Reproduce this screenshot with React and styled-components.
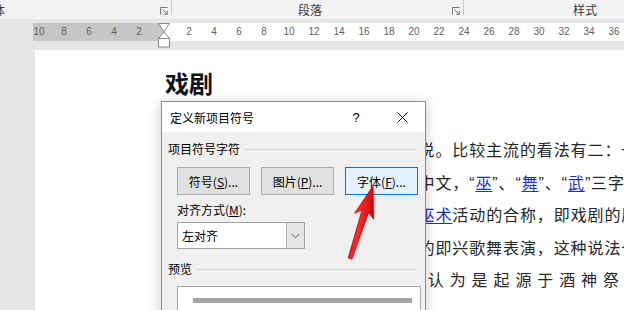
import React from "react";
import styled, { createGlobalStyle } from "styled-components";

const GlobalStyle = createGlobalStyle`
  html, body {
    margin: 0;
    padding: 0;
    background: #e6e6e6;
  }
  body {
    font-family: "Noto Sans CJK SC", "Noto Sans", sans-serif;
  }
`;

const Screen = styled.div`
  position: relative;
  width: 624px;
  height: 310px;
  overflow: hidden;
  background: #e6e6e6;
  display: flex;
  flex-direction: column;
`;

/* ---------- ribbon ---------- */

const Ribbon = styled.div`
  display: flex;
  flex-shrink: 0;
  height: 19px;
  background: #f3f3f3;
`;

const Group = styled.div`
  display: flex;
  align-items: center;
  flex-shrink: 0;
  width: ${({ $width }) => $width}px;
  margin-left: ${({ $offset = 0 }) => $offset}px;
`;

const GroupLabel = styled.div`
  flex: 1;
  text-align: center;
  font-size: 12px;
  line-height: 19px;
  color: #3b3b3b;
  white-space: nowrap;
`;

const Launcher = styled.svg`
  width: 8px;
  height: 8px;
  margin: 2px 3px 0 4px;
  flex-shrink: 0;
`;

const Separator = styled.div`
  width: 1px;
  height: 15px;
  flex-shrink: 0;
  background: #c8c8c8;
  align-self: flex-start;
`;

const LauncherIcon = () => (
  <Launcher viewBox="0 0 8 8">
    <path d="M0.5 7.5V0.5H7.5" fill="none" stroke="#777" strokeWidth="1" />
    <path d="M2.5 2.5L7 7M3.8 7.3H7.3V3.8" fill="none" stroke="#777" strokeWidth="1" />
  </Launcher>
);

/* ---------- ruler ---------- */

const RulerRow = styled.div`
  position: relative;
  display: flex;
  flex-shrink: 0;
  height: 18px;
  margin-top: 4px;
  padding-left: 33px;
`;

const RulerMargin = styled.div`
  display: flex;
  justify-content: flex-end;
  width: 131px;
  padding-right: 12.5px;
  box-sizing: border-box;
  background: #c6c6c6;
`;

const RulerBody = styled.div`
  display: flex;
  flex: 1;
  padding-left: 12.5px;
  background: #ffffff;
`;

const Tick = styled.span`
  width: 25px;
  flex-shrink: 0;
  text-align: center;
  font-family: "Liberation Sans", Arial, sans-serif;
  font-size: 10px;
  line-height: 18px;
  color: #5f5f5f;
`;

const IndentMarker = styled.svg`
  position: absolute;
  left: 157px;
  top: 0;
  width: 14px;
  height: 26px;
`;

/* ---------- document ---------- */

const Workspace = styled.div`
  flex: 1;
  display: flex;
  padding: 9px 0 0 35px;
`;

const Page = styled.div`
  flex: 1;
  background: #ffffff;
  padding: 18px 0 0 130px;
  color: #262626;
`;

const Heading = styled.h1`
  margin: 0;
  font-size: 24px;
  line-height: 30px;
  font-weight: 700;
  color: #111;
`;

const Paragraph = styled.div`
  margin-top: 37px;
`;

const TextLine = styled.div`
  font-family: "Liberation Sans", "Noto Sans CJK SC", sans-serif;
  font-size: 16px;
  line-height: 32.5px;
  letter-spacing: ${({ $spread }) => ($spread ? "5.9px" : "0.9px")};
  white-space: nowrap;
`;

const Link = styled.span`
  color: #1a2fd0;
  text-decoration: underline;
  text-underline-offset: 2px;
`;

/* ---------- dialog ---------- */

const Dialog = styled.div`
  position: absolute;
  left: 161px;
  top: 101px;
  width: 263px;
  height: 240px;
  border: 1px solid #8f8f8f;
  background: #f0f0f0;
  box-shadow: 0 2px 12px rgba(0, 0, 0, 0.22);
  font-size: 12px;
  color: #000;
`;

const TitleBar = styled.div`
  display: flex;
  align-items: center;
  height: 30px;
  background: #ffffff;
`;

const Title = styled.div`
  flex: 1;
  padding-left: 8px;
  font-size: 12px;
`;

const TitleButton = styled.div`
  width: 46px;
  height: 30px;
  display: flex;
  align-items: center;
  justify-content: center;
  font-family: "Liberation Sans", Arial, sans-serif;
  font-size: 13px;
`;

const DialogBody = styled.div`
  padding: 10px 6px 0;
`;

const SectionHeader = styled.div`
  display: flex;
  align-items: center;
  line-height: 14px;
  margin-top: ${({ $gap = 0 }) => $gap}px;

  &::after {
    content: "";
    flex: 1;
    height: 1px;
    margin: 0 2px 0 5px;
    background: #d9d9d9;
  }
`;

const ButtonRow = styled.div`
  display: flex;
  gap: 11px;
  margin: 11px 0 0 9px;
`;

const DialogButton = styled.div`
  width: 73px;
  height: 28px;
  box-sizing: border-box;
  display: flex;
  align-items: center;
  justify-content: center;
  background: ${({ $focused }) => ($focused ? "#e5f1fb" : "#e1e1e1")};
  border: 1px solid ${({ $focused }) => ($focused ? "#0078d7" : "#adadad")};
  font-size: 12px;
  white-space: nowrap;
`;

const FieldLabel = styled.div`
  margin: 8px 0 0 9px;
  line-height: 14px;
`;

const Select = styled.div`
  display: flex;
  width: 128px;
  height: 27px;
  margin: 5px 0 0 9px;
  box-sizing: border-box;
  border: 1px solid #a3a3a3;
  background: #ffffff;
`;

const SelectValue = styled.div`
  flex: 1;
  padding-left: 4px;
  line-height: 25px;
  font-size: 12px;
`;

const SelectArrow = styled.div`
  width: 17px;
  display: flex;
  align-items: center;
  justify-content: center;
  background: #e6e6e6;
  border-left: 1px solid #b9b9b9;
`;

const Preview = styled.div`
  width: 244px;
  height: 60px;
  margin: 10px 0 0 9px;
  box-sizing: border-box;
  border: 1px solid #a8a8a8;
  background: #ffffff;
  padding: 11px 8px 0 15px;
`;

const PreviewBar = styled.div`
  height: 5px;
  background: #a6a6a6;
`;

const ArrowMark = styled.svg`
  position: absolute;
  left: 340px;
  top: 180px;
  width: 45px;
  height: 85px;
  filter: drop-shadow(1px 1px 1px rgba(0, 0, 0, 0.25));
`;

const leftTicks = [10, 8, 6, 4, 2];
const rightTicks = [2, 4, 6, 8, 10, 12, 14, 16, 18, 20, 22, 24, 26, 28, 30, 32, 34, 36];

export default function App() {
  return (
    <Screen>
      <GlobalStyle />

      <Ribbon>
        <Group $width={341} $offset={-170}>
          <GroupLabel>字体</GroupLabel>
          <LauncherIcon />
        </Group>
        <Separator />
        <Group $width={291}>
          <GroupLabel>段落</GroupLabel>
          <LauncherIcon />
        </Group>
        <Separator />
        <Group $width={257}>
          <GroupLabel>样式</GroupLabel>
          <LauncherIcon />
        </Group>
      </Ribbon>

      <RulerRow>
        <RulerMargin>
          {leftTicks.map((n) => (
            <Tick key={`l${n}`}>{n}</Tick>
          ))}
        </RulerMargin>
        <RulerBody>
          {rightTicks.map((n) => (
            <Tick key={`r${n}`}>{n}</Tick>
          ))}
        </RulerBody>
        <IndentMarker viewBox="0 0 14 26">
          <polygon points="1.5,0.5 12.5,0.5 7,8.5" fill="#fff" stroke="#8a8a8a" />
          <polygon points="7,9 1.5,15.5 12.5,15.5" fill="#fff" stroke="#8a8a8a" />
          <rect x="1.5" y="15.5" width="11" height="8.5" fill="#fff" stroke="#8a8a8a" />
        </IndentMarker>
      </RulerRow>

      <Workspace>
        <Page>
          <Heading>戏剧</Heading>
          <Paragraph>
            <TextLine>关于戏剧的起源，历来有很多种学说。比较主流的看法有二：一是</TextLine>
            <TextLine>
              是起源于原始宗教的巫术。在古代中文，“<Link>巫</Link>”、“<Link>舞</Link>”、“<Link>武</Link>”三字同源，
            </TextLine>
            <TextLine>
              音近义通，歌舞原本即是古代各种<Link>巫术</Link>活动的合称，即戏剧的原始形态；
            </TextLine>
            <TextLine>形态；二是认为起源于原始劳动中的即兴歌舞表演，这种说法也有较多的支持者。</TextLine>
            <TextLine $spread>在西方，古希腊戏剧一般被认为是起源于酒神祭祀</TextLine>
          </Paragraph>
        </Page>
      </Workspace>

      <Dialog>
        <TitleBar>
          <Title>定义新项目符号</Title>
          <TitleButton>?</TitleButton>
          <TitleButton>
            <svg width="11" height="11" viewBox="0 0 11 11">
              <path d="M0.5 0.5L10.5 10.5M10.5 0.5L0.5 10.5" stroke="#111" strokeWidth="1" />
            </svg>
          </TitleButton>
        </TitleBar>
        <DialogBody>
          <SectionHeader>项目符号字符</SectionHeader>
          <ButtonRow>
            <DialogButton>
              符号(<u>S</u>)...
            </DialogButton>
            <DialogButton>
              图片(<u>P</u>)...
            </DialogButton>
            <DialogButton $focused>
              字体(<u>F</u>)...
            </DialogButton>
          </ButtonRow>
          <FieldLabel>
            对齐方式(<u>M</u>):
          </FieldLabel>
          <Select>
            <SelectValue>左对齐</SelectValue>
            <SelectArrow>
              <svg width="9" height="6" viewBox="0 0 9 6">
                <path d="M0.8 1L4.5 4.8L8.2 1" fill="none" stroke="#555" strokeWidth="1" />
              </svg>
            </SelectArrow>
          </Select>
          <SectionHeader $gap={13}>预览</SectionHeader>
          <Preview>
            <PreviewBar />
          </Preview>
        </DialogBody>
      </Dialog>

      <ArrowMark viewBox="0 0 45 85">
        <defs>
          <linearGradient id="arrowFill" x1="0" y1="0" x2="1" y2="0.3">
            <stop offset="0" stopColor="#c8060c" />
            <stop offset="0.5" stopColor="#ff2a2a" />
            <stop offset="1" stopColor="#c8060c" />
          </linearGradient>
        </defs>
        <polygon
          points="33,6 33.5,39 28.6,32.2 11.8,79 8.2,77.8 22.2,29.6 14.6,33.2"
          fill="url(#arrowFill)"
          stroke="#a0060a"
          strokeWidth="0.7"
          strokeLinejoin="round"
        />
      </ArrowMark>
    </Screen>
  );
}
